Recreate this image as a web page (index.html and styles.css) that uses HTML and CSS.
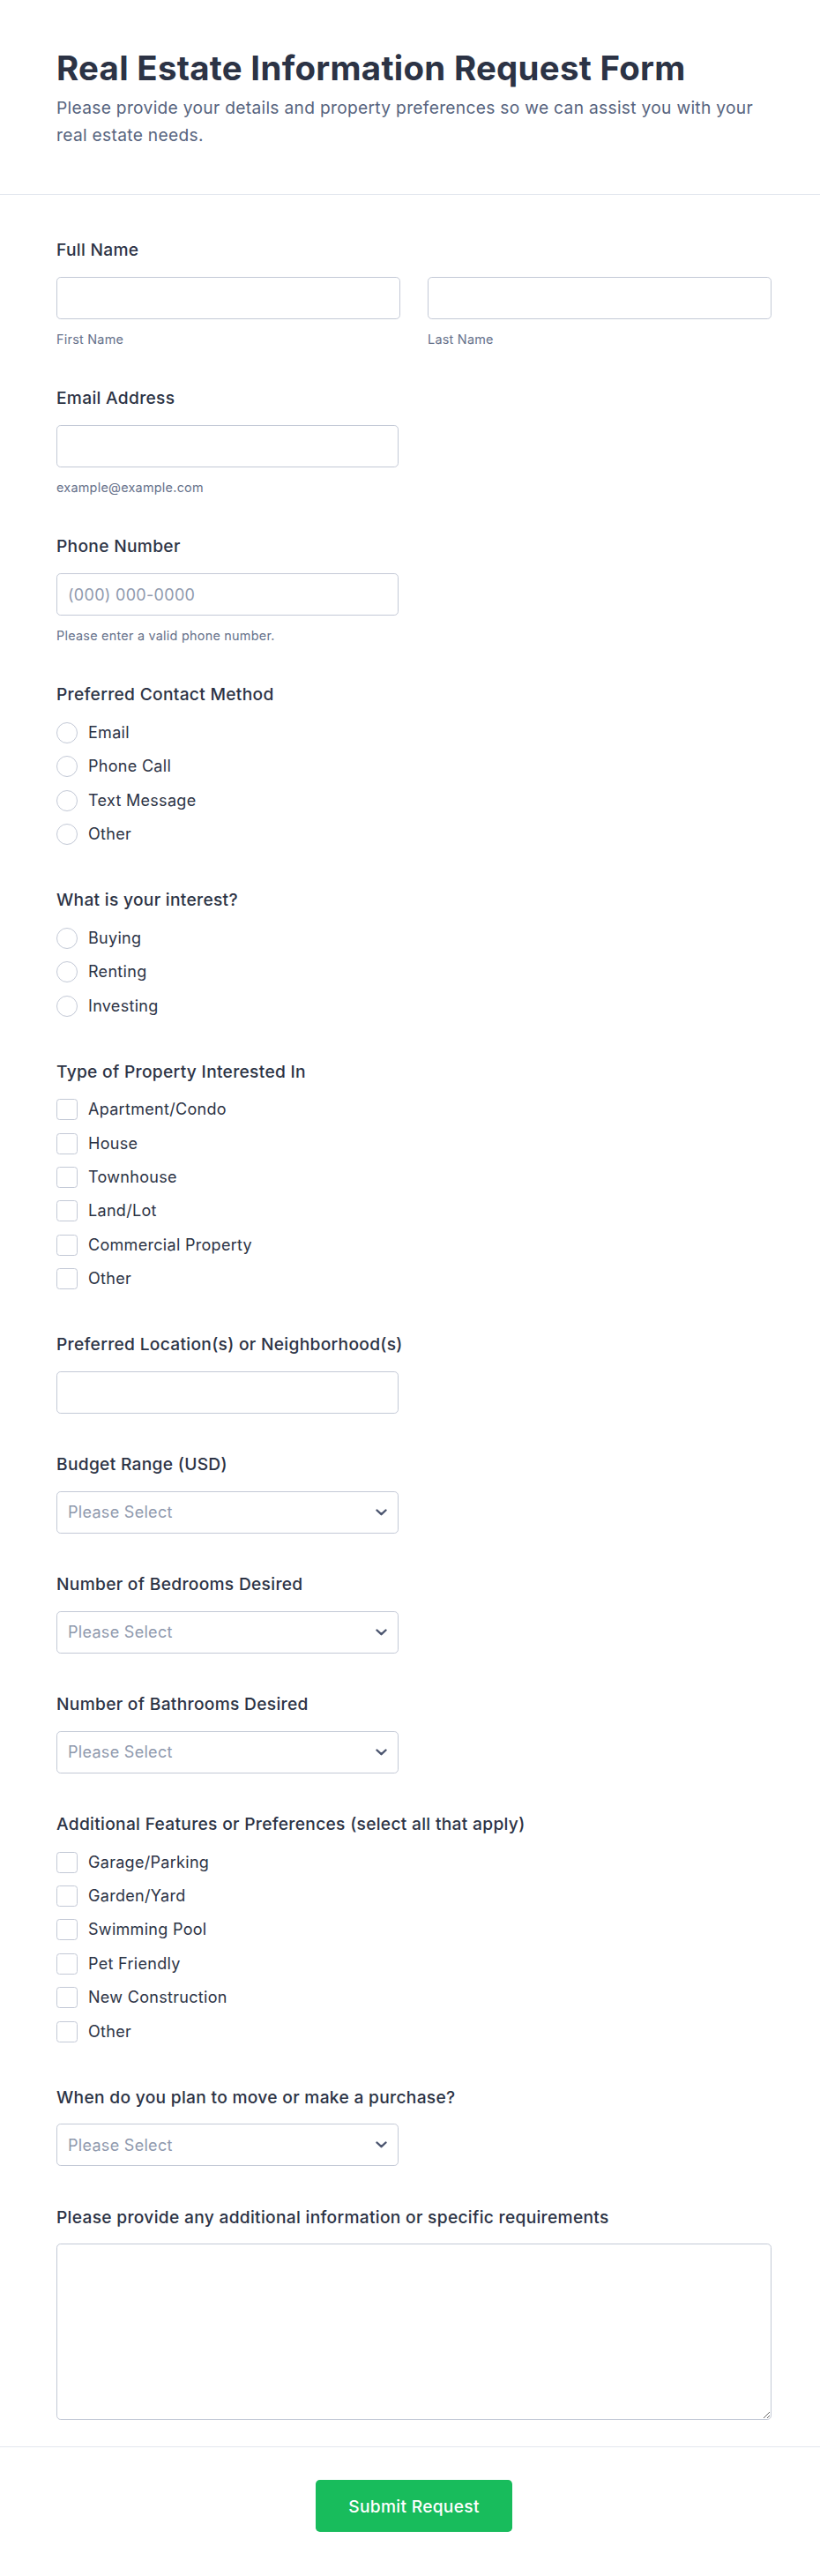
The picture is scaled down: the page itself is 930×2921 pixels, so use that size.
FILE: index.html
```html
<!DOCTYPE html>
<html lang="en">
<head>
<meta charset="utf-8">
<title>Real Estate Information Request Form</title>
<link rel="stylesheet" href="styles.css">
</head>
<body>
<div class="page">
  <header class="header">
    <h1 class="title">Real Estate Information Request Form</h1>
    <p class="subtitle">Please provide your details and property preferences so we can assist you with your real estate needs.</p>
  </header>

  <form class="form">
    <div class="field">
      <label class="label">Full Name</label>
      <div class="name-row">
        <div class="name-col">
          <input class="input" type="text">
          <div class="sublabel">First Name</div>
        </div>
        <div class="name-col">
          <input class="input" type="text">
          <div class="sublabel">Last Name</div>
        </div>
      </div>
    </div>

    <div class="field">
      <label class="label">Email Address</label>
      <input class="input half" type="email">
      <div class="sublabel">example@example.com</div>
    </div>

    <div class="field">
      <label class="label">Phone Number</label>
      <input class="input half" type="tel" placeholder="(000) 000-0000">
      <div class="sublabel">Please enter a valid phone number.</div>
    </div>

    <div class="field group">
      <div class="label opt-label">Preferred Contact Method</div>
      <div class="options">
        <label class="option"><input class="radio" type="radio" name="contact"><span>Email</span></label>
        <label class="option"><input class="radio" type="radio" name="contact"><span>Phone Call</span></label>
        <label class="option"><input class="radio" type="radio" name="contact"><span>Text Message</span></label>
        <label class="option"><input class="radio" type="radio" name="contact"><span>Other</span></label>
      </div>
    </div>

    <div class="field group">
      <div class="label opt-label">What is your interest?</div>
      <div class="options">
        <label class="option"><input class="radio" type="radio" name="interest"><span>Buying</span></label>
        <label class="option"><input class="radio" type="radio" name="interest"><span>Renting</span></label>
        <label class="option"><input class="radio" type="radio" name="interest"><span>Investing</span></label>
      </div>
    </div>

    <div class="field group">
      <div class="label opt-label">Type of Property Interested In</div>
      <div class="options">
        <label class="option"><input class="check" type="checkbox"><span>Apartment/Condo</span></label>
        <label class="option"><input class="check" type="checkbox"><span>House</span></label>
        <label class="option"><input class="check" type="checkbox"><span>Townhouse</span></label>
        <label class="option"><input class="check" type="checkbox"><span>Land/Lot</span></label>
        <label class="option"><input class="check" type="checkbox"><span>Commercial Property</span></label>
        <label class="option"><input class="check" type="checkbox"><span>Other</span></label>
      </div>
    </div>

    <div class="field plain">
      <label class="label">Preferred Location(s) or Neighborhood(s)</label>
      <input class="input half" type="text">
    </div>

    <div class="field plain">
      <label class="label">Budget Range (USD)</label>
      <div class="select-wrap half">
        <select class="select"><option>Please Select</option></select>
        <svg class="chevron" width="13" height="8" viewBox="0 0 13 8"><polyline points="1.5,1.5 6.5,6.2 11.5,1.5" fill="none" stroke="#4c5670" stroke-width="2.4" stroke-linecap="round" stroke-linejoin="round"/></svg>
      </div>
    </div>

    <div class="field plain">
      <label class="label">Number of Bedrooms Desired</label>
      <div class="select-wrap half">
        <select class="select"><option>Please Select</option></select>
        <svg class="chevron" width="13" height="8" viewBox="0 0 13 8"><polyline points="1.5,1.5 6.5,6.2 11.5,1.5" fill="none" stroke="#4c5670" stroke-width="2.4" stroke-linecap="round" stroke-linejoin="round"/></svg>
      </div>
    </div>

    <div class="field plain">
      <label class="label">Number of Bathrooms Desired</label>
      <div class="select-wrap half">
        <select class="select"><option>Please Select</option></select>
        <svg class="chevron" width="13" height="8" viewBox="0 0 13 8"><polyline points="1.5,1.5 6.5,6.2 11.5,1.5" fill="none" stroke="#4c5670" stroke-width="2.4" stroke-linecap="round" stroke-linejoin="round"/></svg>
      </div>
    </div>

    <div class="field group">
      <div class="label opt-label">Additional Features or Preferences (select all that apply)</div>
      <div class="options">
        <label class="option"><input class="check" type="checkbox"><span>Garage/Parking</span></label>
        <label class="option"><input class="check" type="checkbox"><span>Garden/Yard</span></label>
        <label class="option"><input class="check" type="checkbox"><span>Swimming Pool</span></label>
        <label class="option"><input class="check" type="checkbox"><span>Pet Friendly</span></label>
        <label class="option"><input class="check" type="checkbox"><span>New Construction</span></label>
        <label class="option"><input class="check" type="checkbox"><span>Other</span></label>
      </div>
    </div>

    <div class="field plain">
      <label class="label">When do you plan to move or make a purchase?</label>
      <div class="select-wrap half">
        <select class="select"><option>Please Select</option></select>
        <svg class="chevron" width="13" height="8" viewBox="0 0 13 8"><polyline points="1.5,1.5 6.5,6.2 11.5,1.5" fill="none" stroke="#4c5670" stroke-width="2.4" stroke-linecap="round" stroke-linejoin="round"/></svg>
      </div>
    </div>

    <div class="field last">
      <label class="label">Please provide any additional information or specific requirements</label>
      <textarea class="textarea"></textarea>
    </div>
  </form>

  <footer class="footer">
    <button class="submit" type="button">Submit Request</button>
  </footer>
</div>
</body>
</html>
```

FILE: styles.css
```css
* {
  box-sizing: border-box;
}

html, body {
  margin: 0;
  padding: 0;
  background: #ffffff;
}

body {
  font-family: "Inter", "Noto Sans", sans-serif;
  color: #2c3345;
}

.page {
  width: 930px;
}

.header {
  padding: 54px 54px 52px 64px;
  border-bottom: 1px solid #e3e7ee;
}

.title {
  margin: 0;
  font-size: 38.4px;
  line-height: 46px;
  font-weight: 700;
  color: #2c3345;
  letter-spacing: 0.3px;
}

.subtitle {
  margin: 7px 0 0;
  font-size: 19.2px;
  line-height: 30.72px;
  font-weight: 400;
  color: #57647e;
  letter-spacing: 0.3px;
}

.form {
  padding: 48px 55px 30px 64px;
}

.field {
  display: flex;
  flex-direction: column;
  align-items: flex-start;
  margin-bottom: 43.2px;
}

.field.group {
  margin-bottom: 48px;
}

.field.last {
  margin-bottom: 0;
}

.label {
  display: block;
  font-size: 19.2px;
  line-height: 28.8px;
  font-weight: 500;
  color: #2c3345;
  letter-spacing: 0.3px;
  margin-bottom: 16px;
}

.opt-label {
  margin-bottom: 16.8px;
}

.name-row {
  display: grid;
  grid-template-columns: 390px 390px;
  column-gap: 31px;
  width: 100%;
}

.name-col {
  display: flex;
  flex-direction: column;
}

.input {
  width: 100%;
  height: 48px;
  border: 1px solid #c3c9d6;
  border-radius: 4.8px;
  padding: 0 12px;
  font-family: inherit;
  font-size: 18px;
  letter-spacing: 0.3px;
  color: #2c3345;
  background: #fff;
  outline: none;
}

.input::placeholder {
  color: #8f99ad;
}

.half {
  width: 388px;
}

.sublabel {
  margin-top: 14px;
  font-size: 14.4px;
  line-height: 18px;
  letter-spacing: 0.25px;
  color: #66718a;
}

.options {
  display: flex;
  flex-direction: column;
  gap: 14.4px;
}

.option {
  display: flex;
  align-items: center;
  gap: 12px;
  height: 24px;
  font-size: 18px;
  line-height: 24px;
  letter-spacing: 0.3px;
  color: #2c3345;
}

.radio,
.check {
  appearance: none;
  -webkit-appearance: none;
  margin: 0;
  width: 24px;
  height: 24px;
  border: 1.5px solid #c3c9d6;
  background: #fff;
  flex: 0 0 24px;
}

.radio {
  border-radius: 50%;
}

.check {
  border-radius: 3.6px;
}

.select-wrap {
  position: relative;
  height: 48px;
}

.select {
  appearance: none;
  -webkit-appearance: none;
  width: 100%;
  height: 48px;
  border: 1px solid #c3c9d6;
  border-radius: 4.8px;
  padding: 0 36px 0 12px;
  font-family: inherit;
  font-size: 18px;
  letter-spacing: 0.3px;
  color: #8f99ad;
  background: #fff;
  outline: none;
}

.chevron {
  position: absolute;
  right: 13px;
  top: 20px;
  pointer-events: none;
}

.textarea {
  display: block;
  width: 100%;
  height: 200px;
  border: 1px solid #c3c9d6;
  border-radius: 4.8px;
  padding: 10px 12px;
  font-family: inherit;
  font-size: 18px;
  background: #fff;
  resize: vertical;
  outline: none;
}

.footer {
  border-top: 1px solid #e3e7ee;
  padding: 37px 55px 50px 64px;
  display: flex;
  justify-content: center;
}

.submit {
  height: 58.4px;
  padding: 0 37px;
  border: none;
  border-radius: 4.8px;
  background: #18bc5c;
  color: #ffffff;
  font-family: inherit;
  font-size: 19.2px;
  font-weight: 500;
  letter-spacing: 0.3px;
  cursor: pointer;
}
```
